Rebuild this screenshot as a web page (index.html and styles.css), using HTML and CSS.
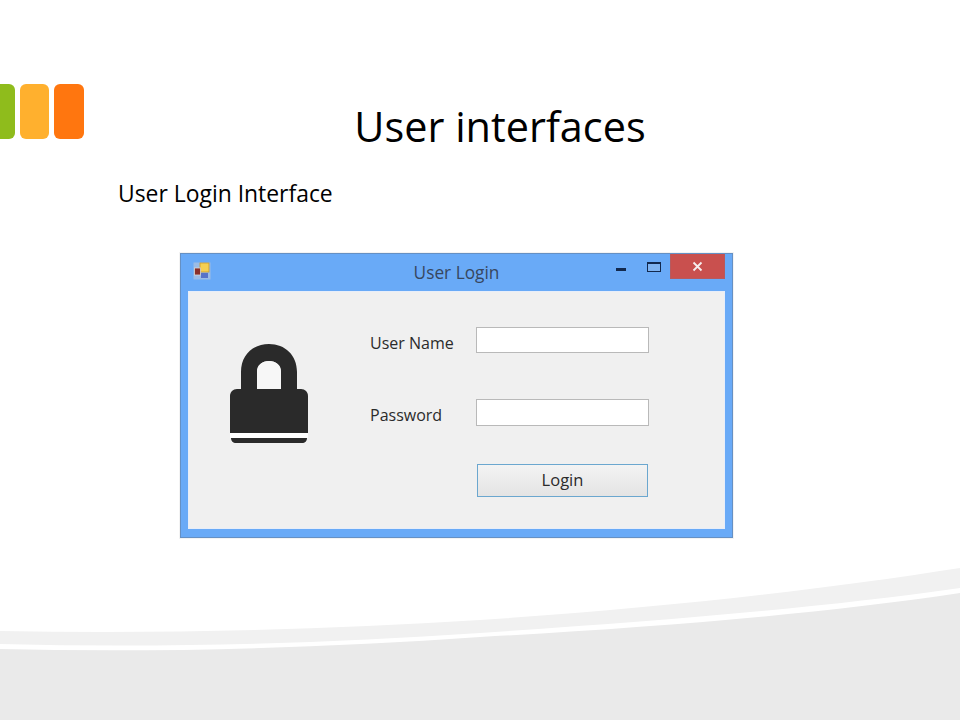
FILE: index.html
```html
<!DOCTYPE html>
<html lang="en">
<head>
<meta charset="utf-8">
<title>User interfaces</title>
<link rel="stylesheet" href="styles.css">
</head>
<body>
<main class="slide">
  <svg class="backdrop" width="960" height="720" viewBox="0 0 960 720" aria-hidden="true">
    <path class="band" d="M0 631 C160 634 320 630 480 620 C660 608 820 590 960 568 V588 C820 608 660 621 480 633 C320 644 160 648 0 644 Z"/>
    <path class="floor" d="M0 649 C160 653 320 648 480 637 C660 627 820 614 960 593 V720 H0 Z"/>
  </svg>

  <header class="head">
    <div class="logo">
      <span class="tile tile-green"></span>
      <span class="tile tile-amber"></span>
      <span class="tile tile-orange"></span>
    </div>
    <h1 class="title">User interfaces</h1>
  </header>

  <p class="subtitle">User Login Interface</p>

  <section class="window">
    <div class="titlebar">
      <svg class="app-icon" width="18" height="18" viewBox="0 0 18 18" aria-hidden="true">
        <rect x="0.5" y="0.5" width="17" height="17" fill="#9bbce6"/>
        <rect x="7" y="1" width="9" height="9" fill="#f5cf52" stroke="#c79a2c" stroke-width="0.8"/>
        <rect x="1.5" y="6" width="6" height="7" fill="#8a2f2a" stroke="#d8d8d8" stroke-width="0.8"/>
        <rect x="8" y="11" width="7" height="5" fill="#5873c8"/>
      </svg>
      <span class="window-name">User Login</span>
      <div class="controls">
        <span class="ctl-min"></span>
        <span class="ctl-max"></span>
        <span class="ctl-close">
          <svg width="11" height="11" viewBox="0 0 11 11" aria-hidden="true"><path d="M1.5 1.5 L9.5 9.5 M9.5 1.5 L1.5 9.5" stroke="#f6eeee" stroke-width="1.8" fill="none"/></svg>
        </span>
      </div>
    </div>
    <div class="client">
      <svg class="lock" width="78" height="100" viewBox="0 0 78 100" aria-hidden="true">
        <path class="lock-gap" d="M0 89 H78 V94 H0 Z"/>
        <path class="lock-fill" d="M11 46 V28 C11 11 23 0 39 0 C55 0 67 11 67 28 V46 H51 V28 C51 21 46 17 39 17 C32 17 27 21 27 28 V46 Z"/>
        <path class="lock-hole" d="M27 45 V28 C27 21 32 17 39 17 C46 17 51 21 51 28 V45 Z"/>
        <path class="lock-fill" d="M7 45 H71 C75 45 78 48 78 52 V89 H0 V52 C0 48 3 45 7 45 Z"/>
        <path class="lock-fill" d="M1 94 H77 C77 97 75 99 72 99 H6 C3 99 1 97 1 94 Z"/>
      </svg>
      <form class="form">
        <label class="field-label" for="user">User Name</label>
        <input class="field" id="user" type="text">
        <label class="field-label field-label-low" for="pass">Password</label>
        <input class="field field-low" id="pass" type="text">
        <button class="login" type="button">Login</button>
      </form>
    </div>
  </section>
</main>
</body>
</html>
```
FILE: styles.css
```css
html, body {
  margin: 0;
  padding: 0;
  background: #fff;
}

.slide {
  position: relative;
  width: 960px;
  height: 720px;
  overflow: hidden;
  font-family: "Open Sans", "Liberation Sans", sans-serif;
  color: #000;
}

.backdrop {
  position: absolute;
  left: 0;
  top: 0;
}
.band { fill: #f1f1f1; }
.floor { fill: #eaeaea; }

.head {
  position: relative;
  display: grid;
  grid-template-columns: 84px 832px;
  padding-top: 84px;
}

.logo {
  display: flex;
  gap: 5px;
  margin-left: -15px;
  width: 99px;
  height: 55px;
}
.tile {
  flex: 0 0 29px;
  border-radius: 6px;
}
.tile-green { flex-basis: 30px; background: #8fbc1c; }
.tile-amber { background: #ffb02e; }
.tile-orange { flex-basis: 30px; background: #ff760f; }

.title {
  margin: 0;
  font-size: 41.4px;
  font-weight: 400;
  line-height: 84px;
  height: 86px;
  text-align: center;
  letter-spacing: 0;
}

.subtitle {
  position: relative;
  margin: 0;
  padding: 9px 0 0 118px;
  font-size: 22.9px;
  line-height: 29px;
}

.window {
  position: relative;
  box-sizing: border-box;
  width: 553px;
  height: 285px;
  margin: 45px 0 0 180px;
  padding: 0 8px 9px;
  display: flex;
  flex-direction: column;
  background: #69aaf7;
  border: 1px solid #6590c4;
  box-shadow: 0 0 0 1px #f3f3f3;
}

.titlebar {
  display: grid;
  grid-template-columns: 1fr auto 1fr;
  align-items: center;
  height: 38px;
  flex: none;
}

.app-icon {
  margin: 0 0 4px 4px;
}

.window-name {
  font-size: 17.3px;
  color: #37475f;
  padding-bottom: 1px;
}

.controls {
  display: flex;
  justify-content: flex-end;
  align-items: flex-start;
  height: 38px;
  margin-right: -1px;
}
.ctl-min {
  width: 10px;
  height: 3px;
  margin: 14px 0 0 0;
  background: #12294e;
}
.ctl-max {
  box-sizing: border-box;
  width: 14px;
  height: 10px;
  margin: 8px 0 0 21px;
  border: 1px solid #12294e;
  border-top-width: 2px;
  background: #7fb3f0;
}
.ctl-close {
  display: flex;
  align-items: center;
  justify-content: center;
  width: 55px;
  height: 25px;
  margin: 0 0 0 9px;
  background: #c9504e;
  border: solid #b65a5e;
  border-width: 0 1px 1px;
  box-sizing: border-box;
}

.client {
  flex: 1;
  display: flex;
  align-items: flex-start;
  background: #f0f0f0;
  box-shadow: 0 0 0 1px #e7eefa;
}

.lock {
  margin: 52px 0 0 41px;
  flex: none;
}
.lock-fill { fill: #2a2a2a; }
.lock-gap { fill: #fff; }
.lock-hole { fill: #f7f7f7; }

.form {
  margin: 35px 0 0 62px;
  display: grid;
  grid-template-columns: 106px 173px;
  grid-template-rows: 26px 27px 33px;
  row-gap: 46px;
}
.form .login { margin-top: -8px; }

.field-label {
  font-size: 16px;
  line-height: 32px;
  color: #2b2b2b;
  white-space: nowrap;
}
.field-label-low { line-height: 32px; }

.field {
  box-sizing: border-box;
  width: 173px;
  height: 100%;
  margin: 0;
  background: #fff;
  border: 1.5px solid #b9b9b9;
  border-radius: 0;
  padding: 0;
}

.login {
  grid-column: 2;
  box-sizing: border-box;
  width: 171px;
  height: 33px;
  margin-left: 1px;
  padding: 0 0 2px;
  font-family: "Open Sans", "Liberation Sans", sans-serif;
  font-size: 16.5px;
  color: #2b2b2b;
  background: linear-gradient(#f3f3f3, #e4e4e4);
  border: 1.5px solid #6ba7cf;
  border-radius: 0;
}
```
